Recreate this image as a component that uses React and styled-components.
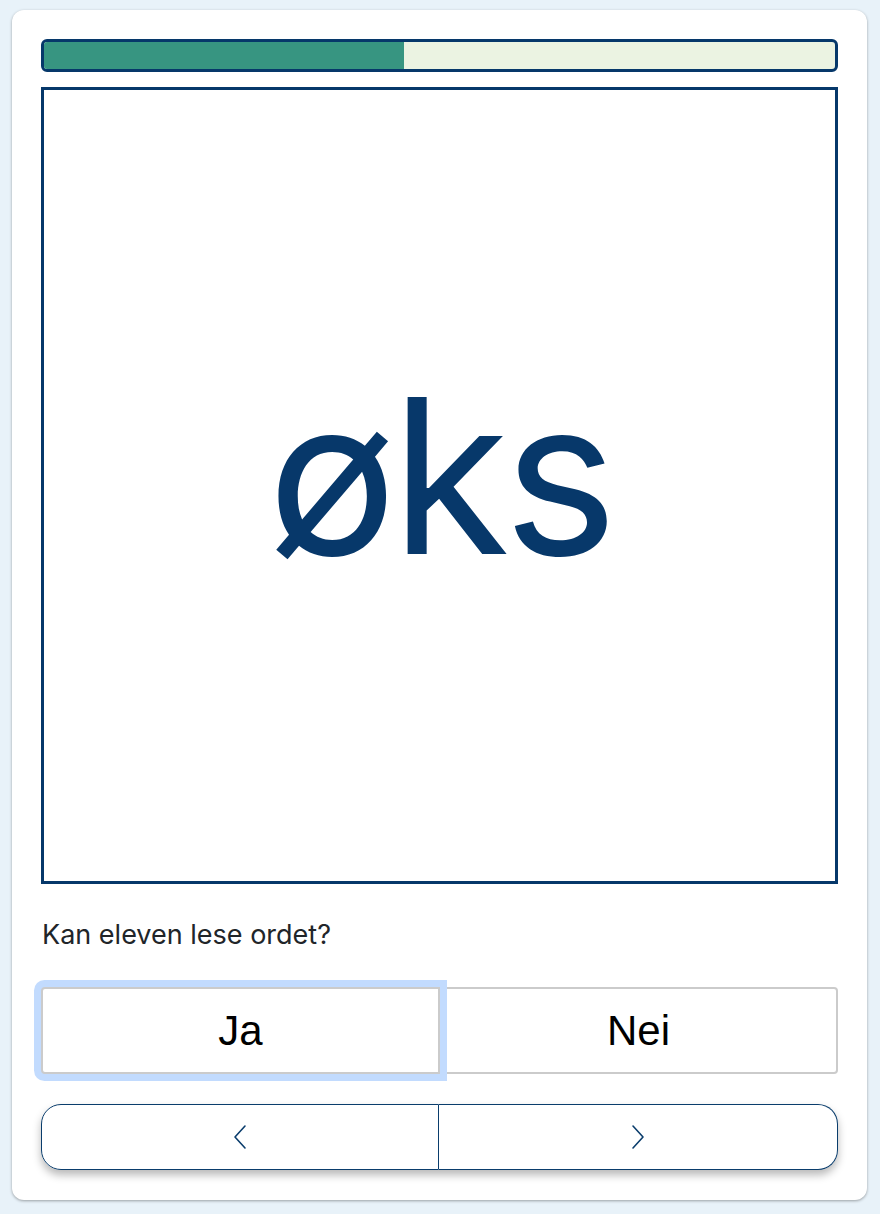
import styled, { createGlobalStyle } from "styled-components";

const GlobalStyle = createGlobalStyle`
  html, body {
    margin: 0;
    background: #e8f2f9;
  }
  body {
    padding: 10px 13px 14px 12px;
    font-family: "Liberation Sans", Arial, sans-serif;
  }
`;

const Card = styled.div`
  background: #fff;
  border-radius: 12px;
  box-shadow: 0 1px 3px rgba(0, 0, 0, 0.35);
  padding: 29px 29px 30px;
  display: flex;
  flex-direction: column;
`;

const Progress = styled.div`
  height: 27px;
  border: 3px solid #06386a;
  border-radius: 6px;
  background: #ebf3e2;
  overflow: hidden;
`;

const ProgressFill = styled.div`
  height: 100%;
  background: #379581;
`;

const WordBox = styled.div`
  margin-top: 15px;
  aspect-ratio: 1 / 1;
  border: 3px solid #06386a;
  display: flex;
  align-items: center;
  justify-content: center;
`;

const Word = styled.div`
  font-family: Inter, "Liberation Sans", sans-serif;
  font-size: 216px;
  line-height: 1;
  color: #07386a;
  letter-spacing: -6px;
  margin-top: -20px;
`;

const Question = styled.div`
  margin-top: 30px;
  font-family: Inter, "Liberation Sans", sans-serif;
  font-size: 27px;
  line-height: 42px;
  color: #212529;
  padding-left: 1px;
`;

const AnswerGroup = styled.div`
  margin-top: 31px;
  display: grid;
  grid-template-columns: 399px 1fr;
`;

const AnswerButton = styled.button`
  height: 87px;
  background: #fff;
  border: 2px solid #cbcbcb;
  font-family: "Liberation Sans", Arial, sans-serif;
  font-size: 42px;
  color: #000;
  padding: 0;
  position: relative;
  border-radius: ${(p) => (p.$first ? "4px 0 0 4px" : "0 4px 4px 0")};
  margin-left: ${(p) => (p.$first ? "0" : "-1px")};
  z-index: ${(p) => (p.$focus ? 1 : 0)};
  box-shadow: ${(p) => (p.$focus ? "0 0 0 7px #c2dbfe" : "none")};
`;

const Nav = styled.div`
  margin-top: 30px;
  display: grid;
  grid-template-columns: 398px 1fr;
  border-radius: 20px;
  box-shadow: 0 5px 8px rgba(0, 0, 0, 0.28);
`;

const NavButton = styled.button`
  height: 66px;
  background: #fff;
  border: 1px solid #0a3d6c;
  border-left-width: ${(p) => (p.$first ? "1px" : "0")};
  border-radius: ${(p) => (p.$first ? "20px 0 0 20px" : "0 20px 20px 0")};
  display: flex;
  align-items: center;
  justify-content: center;
  padding: 0;
  color: #0a3d6c;
`;

const Chevron = ({ dir }) => (
  <svg width="14" height="26" viewBox="0 0 14 26" fill="none">
    <polyline
      points={dir === "left" ? "12,2 2,13 12,24" : "2,2 12,13 2,24"}
      stroke="currentColor"
      strokeWidth="1.6"
      strokeLinecap="round"
      strokeLinejoin="round"
    />
  </svg>
);

const App = () => {
  const progress = 45.45;

  return (
    <>
      <GlobalStyle />
      <Card>
        <Progress>
          <ProgressFill style={{ width: `${progress}%` }} />
        </Progress>
        <WordBox>
          <Word>øks</Word>
        </WordBox>
        <Question>Kan eleven lese ordet?</Question>
        <AnswerGroup>
          <AnswerButton $first $focus>
            Ja
          </AnswerButton>
          <AnswerButton>Nei</AnswerButton>
        </AnswerGroup>
        <Nav>
          <NavButton $first>
            <Chevron dir="left" />
          </NavButton>
          <NavButton>
            <Chevron dir="right" />
          </NavButton>
        </Nav>
      </Card>
    </>
  );
};

export default App;
